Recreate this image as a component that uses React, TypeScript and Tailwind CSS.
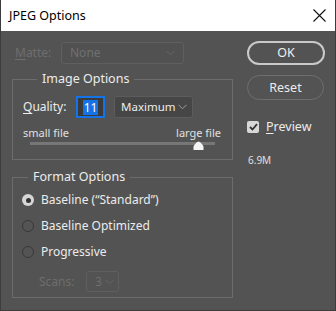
import React, { useState } from "react";

type Fmt = "baseline" | "optimized" | "progressive";

function Chevron({ className = "" }: { className?: string }) {
  return (
    <svg width="9" height="6" viewBox="0 0 9 6" className={className}>
      <polyline points="0.5,0.8 4.5,4.8 8.5,0.8" fill="none" stroke="currentColor" strokeWidth="1" />
    </svg>
  );
}

function Radio({ checked, label, onClick }: { checked: boolean; label: string; onClick: () => void }) {
  return (
    <button onClick={onClick} className="flex items-center h-[26px] text-left">
      <span
        className={
          checked
            ? "w-[12px] h-[12px] rounded-full bg-[#d6d6d6] flex items-center justify-center ml-[9px]"
            : "w-[12px] h-[12px] rounded-full bg-[#545454] border border-[#393939] ml-[9px]"
        }
      >
        {checked && <span className="w-[5px] h-[5px] rounded-full bg-[#333]" />}
      </span>
      <span className="ml-[7px] text-[#ececec]">{label}</span>
    </button>
  );
}

export default function App() {
  const [fmt, setFmt] = useState<Fmt>("baseline");
  const [preview, setPreview] = useState(true);

  return (
    <div
      className="w-[336px] h-[311px] flex flex-col bg-[#535353] border-x border-b border-[#3d3d3d] text-[12px] leading-[18px] select-none"
      style={{ fontFamily: '"Noto Sans", "Open Sans", sans-serif' }}
    >
      {/* title bar */}
      <div className="h-[31px] bg-white flex items-center justify-between pl-[8px] pr-[8px] shrink-0">
        <span className="text-black text-[12.5px]">JPEG Options</span>
        <svg width="13" height="13" viewBox="0 0 13 13" className="mr-[1px]">
          <path d="M0.5 0.5 L12.5 12.5 M12.5 0.5 L0.5 12.5" stroke="#111" strokeWidth="1.1" />
        </svg>
      </div>

      <div className="flex flex-1">
        {/* left column */}
        <div className="w-[221px] ml-[11px] flex flex-col">
          <div className="flex items-center mt-[11px] h-[22px]">
            <span className="ml-[3px] w-[46px] text-[#6e6e6e]">
              <span className="underline underline-offset-2">M</span>atte:
            </span>
            <div className="w-[123px] h-[22px] rounded-[3px] border border-[#5f5f5f] bg-[#515151] flex items-center justify-between px-[8px] text-[#707070]">
              <span>None</span>
              <Chevron className="text-[#666]" />
            </div>
          </div>

          <fieldset className="mt-[6px] border border-[#6c6c6c] px-[10px] pb-[9px]">
            <legend className="ml-[14px] px-[5px] text-[#ececec] text-[12.5px]">Image Options</legend>
            <div className="flex items-center mt-[8px] h-[22px]">
              <span className="text-[#ececec] w-[53px]">
                <span className="underline underline-offset-2">Q</span>uality:
              </span>
              <div className="w-[29px] h-[22px] border-2 border-[#1473e6] bg-[#3b3b3b] flex items-center justify-center">
                <span className="bg-[#1473e6] text-white px-[1px] leading-[15px]">11</span>
              </div>
              <div className="ml-[9px] w-[79px] h-[22px] rounded-[3px] border border-[#5c5c5c] bg-[#464646] flex items-center justify-between pl-[6px] pr-[5px] text-[#ececec]">
                <span className="text-[11.5px]">Maximum</span>
                <Chevron className="text-[#9a9a9a]" />
              </div>
            </div>
            <div className="flex justify-between mt-[8px] text-[11px] leading-[14px] text-[#e0e0e0] pr-[1px]">
              <span>small file</span>
              <span>large file</span>
            </div>
            <div className="relative mx-[7px] mt-[1px] h-[9px]">
              <div className="absolute left-0 right-0 top-[1px] h-[3px] bg-[#777]" />
              <svg width="11" height="9" viewBox="0 0 11 9" className="absolute left-[163px] top-0">
                <path d="M0.5 9 L0.5 6 C0.5 4.5 4 0.5 5.5 0.5 C7 0.5 10.5 4.5 10.5 6 L10.5 9 Z" fill="#f4f4f4" />
              </svg>
            </div>
          </fieldset>

          <fieldset className="mt-[8px] border border-[#6c6c6c] pb-[5px]">
            <legend className="ml-[15px] px-[5px] text-[#ececec] text-[12.5px]">Format Options</legend>
            <div className="flex flex-col mt-[1px]">
              <Radio checked={fmt === "baseline"} label="Baseline (“Standard”)" onClick={() => setFmt("baseline")} />
              <Radio checked={fmt === "optimized"} label="Baseline Optimized" onClick={() => setFmt("optimized")} />
              <Radio checked={fmt === "progressive"} label="Progressive" onClick={() => setFmt("progressive")} />
            </div>
            <div className="flex items-center mt-[6px] h-[21px]">
              <span className="ml-[26px] w-[47px] text-[#6e6e6e]">Scans:</span>
              <div className="w-[33px] h-[21px] rounded-[3px] border border-[#5f5f5f] flex items-center justify-between pl-[8px] pr-[4px] text-[#6e6e6e]">
                <span>3</span>
                <Chevron className="text-[#666]" />
              </div>
            </div>
          </fieldset>
        </div>

        {/* right column */}
        <div className="ml-[14px] flex flex-col items-start">
          <button className="mt-[10px] w-[78px] h-[24px] rounded-full border-2 border-[#c9c9c9] text-[#f0f0f0] text-[12.5px] flex items-center justify-center">
            OK
          </button>
          <button className="mt-[10px] w-[77px] h-[25px] rounded-full border border-[#6f6f6f] text-[#ececec] text-[12.5px] flex items-center justify-center">
            Reset
          </button>
          <button onClick={() => setPreview(!preview)} className="mt-[18px] flex items-center">
            <span className="w-[12px] h-[12px] rounded-[2px] bg-[#d8d8d8] flex items-center justify-center">
              {preview && (
                <svg width="9" height="8" viewBox="0 0 9 8">
                  <polyline points="1,4 3.5,6.5 8,1.2" fill="none" stroke="#333" strokeWidth="1.8" />
                </svg>
              )}
            </span>
            <span className="ml-[7px] text-[#ececec] text-[12.5px]">
              <span className="underline underline-offset-2">P</span>review
            </span>
          </button>
          <span className="mt-[18px] ml-[1px] text-[10px] leading-[12px] text-[#e0e0e0]">6.9M</span>
        </div>
      </div>
    </div>
  );
}
